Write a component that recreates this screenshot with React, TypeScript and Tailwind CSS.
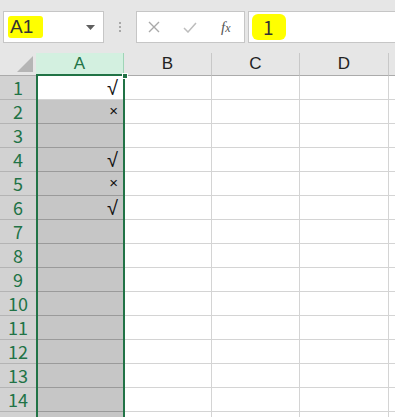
import React from "react";

const font = { fontFamily: '"Liberation Sans", "Noto Sans CJK SC", sans-serif' };

export default function App() {
  const rows = Array.from({ length: 14 }, (_, i) => i + 1);
  const vals: Record<number, string> = { 1: "√", 2: "×", 4: "√", 5: "×", 6: "√" };
  return (
    <div className="w-[395px] h-[417px] overflow-hidden bg-white relative" style={font}>
      {/* toolbar */}
      <div className="h-[53px] bg-[#e6e6e6] flex items-start pt-[11px] pl-[3px] gap-0">
        <div className="w-[101px] h-[32px] bg-white border border-[#c6c6c6] flex items-center justify-between pl-[4px] pr-[8px]">
          <span className="bg-[#ffff00] text-[19px] leading-[20px] text-[#333] px-[2px] pr-[10px] py-[1px] rounded-[3px]">A1</span>
          <svg width="9" height="5" viewBox="0 0 9 5"><path d="M0 0h9L4.5 5z" fill="#5f5f5f" /></svg>
        </div>
        <div className="w-[32px] h-[32px] flex items-center justify-center">
          <div className="flex flex-col gap-[2px]">
            <div className="w-[2px] h-[2px] bg-[#a8a8a8]" />
            <div className="w-[2px] h-[2px] bg-[#a8a8a8]" />
            <div className="w-[2px] h-[2px] bg-[#a8a8a8]" />
          </div>
        </div>
        <div className="w-[109px] h-[32px] bg-white border border-[#c6c6c6] flex items-center">
          <svg className="ml-[11px]" width="12" height="12" viewBox="0 0 12 12"><path d="M1 1L11 11M11 1L1 11" stroke="#a9a9a9" strokeWidth="1.4" /></svg>
          <svg className="ml-[23px]" width="14" height="11" viewBox="0 0 14 11"><path d="M1 6L5 10L13 1" stroke="#bdbdbd" strokeWidth="1.5" fill="none" /></svg>
          <span className="ml-[24px] text-[15px] italic text-[#555]" style={{ fontFamily: '"Liberation Serif", serif' }}>f<span className="text-[12px]">x</span></span>
        </div>
        <div className="ml-[3px] flex-1 h-[32px] bg-white border border-[#c6c6c6] border-r-0 flex items-center pl-[3px]">
          <span className="bg-[#ffff00] text-[19px] leading-[26px] text-[#333] pl-[11px] pr-[12px] rounded-[6px]" style={{ fontFamily: '"Noto Sans CJK SC", sans-serif' }}>1</span>
        </div>
      </div>
      {/* sheet */}
      <div className="grid grid-cols-[36px_88px_88px_88px_89px_1fr]">
        {/* header row */}
        <div className="h-[23px] bg-[#e6e6e6] border-b border-[#ababab] relative flex items-end justify-end pr-[3px] pb-[3px]">
          <svg width="16" height="16" viewBox="0 0 16 16"><path d="M16 0V16H0z" fill="#b5b5b5" /></svg>
        </div>
        <div className="h-[23px] bg-[#d3f0e0] border-b-2 border-[#217346] border-r border-r-[#9fd5b7] flex items-center justify-center text-[17px] text-[#217346]">A</div>
        {["B", "C", "D"].map((c) => (
          <div key={c} className="h-[23px] bg-[#e6e6e6] border-b border-[#ababab] border-r border-r-[#c8c8c8] flex items-center justify-center text-[17px] text-[#222]">{c}</div>
        ))}
        <div className="h-[23px] bg-[#e6e6e6] border-b border-[#ababab]" />
        {rows.map((r) => (
          <React.Fragment key={r}>
            <div className="h-[24px] bg-[#d2d2d2] border-b border-[#b4b4b4] flex items-center justify-center text-[18px] text-[#217346]" style={{ fontFamily: '"Noto Sans CJK SC", sans-serif' }}>{r}</div>
            <div className={`h-[24px] border-b ${r === 1 ? "bg-white border-[#d4d4d4]" : "bg-[#c6c6c6] border-[#9a9a9a]"} flex items-center justify-end pr-[6px] text-[#111] ${vals[r] === "×" ? "text-[15px]" : "text-[20px]"}`}>{vals[r] ?? ""}</div>
            <div className="h-[24px] border-b border-r border-[#d4d4d4]" />
            <div className="h-[24px] border-b border-r border-[#d4d4d4]" />
            <div className="h-[24px] border-b border-r border-[#d4d4d4]" />
            <div className="h-[24px] border-b border-[#d4d4d4]" />
          </React.Fragment>
        ))}
        <div className="h-[24px] bg-[#d2d2d2]" />
        <div className="h-[24px] bg-[#c6c6c6]" />
        <div className="h-[24px] border-r border-[#d4d4d4]" />
        <div className="h-[24px] border-r border-[#d4d4d4]" />
        <div className="h-[24px] border-r border-[#d4d4d4]" />
        <div className="h-[24px]" />
      </div>
      {/* selection outline */}
      <div className="absolute left-[36px] top-[76px] w-[89px] h-[400px] border-x-2 border-[#217346] pointer-events-none" />
      <div className="absolute left-[122px] top-[73px] w-[6px] h-[6px] bg-[#217346] border border-white" />
    </div>
  );
}
